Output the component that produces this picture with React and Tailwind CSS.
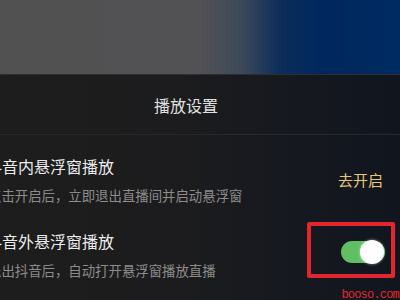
import React, { useState } from 'react';

const font = { fontFamily: '"Noto Sans CJK SC", "Noto Sans", sans-serif' };

const SettingRow = ({ title, desc, right, className = '' }) => (
  <div className={`flex items-center justify-between pr-[15px] ${className}`}>
    <div className="ml-[-14px] flex flex-col">
      <div className="text-[16px] leading-[20px] text-[#ececec] whitespace-nowrap">{title}</div>
      <div className="mt-[10px] ml-[2px] text-[13.4px] leading-[18px] text-[#8c8c8c] whitespace-nowrap">{desc}</div>
    </div>
    {right}
  </div>
);

const Toggle = ({ on, onChange }) => (
  <button
    onClick={() => onChange(!on)}
    className={`relative w-[44px] h-[22px] rounded-full mb-[6px] ${on ? 'bg-[#5fbf62]' : 'bg-[#555]'}`}
  >
    <span
      className={`absolute top-[-1px] w-[24px] h-[24px] rounded-full bg-white shadow-[0_0_3px_rgba(255,255,255,0.6)] ${on ? 'left-[19px]' : 'left-[1px]'}`}
    />
    {/* red highlight box */}
    <span className="absolute left-[-34px] top-[-19px] right-[-10px] bottom-[-15px] border-[4px] border-[#e3262d] rounded-[2px] pointer-events-none" />
  </button>
);

export default function App() {
  const [outside, setOutside] = useState(true);

  return (
    <div className="relative w-[400px] h-[300px] overflow-hidden flex flex-col bg-[#1b1c1e]" style={font}>
      {/* dimmed video behind the sheet */}
      <div className="h-[75px] shrink-0 bg-[linear-gradient(to_right,#515151_0%,#525255_50%,#3e4a5a_60%,#0d2d5a_70%,#00285e_80%,#002a62_100%)] border-b border-[#2e2e30]" />

      {/* sheet */}
      <div className="flex-1 flex flex-col bg-[linear-gradient(to_right,#1d1d1d_0%,#1c1c1e_45%,#16191f_70%,#11151e_100%)]">
        <div className="h-[59px] flex items-center justify-center pr-[28px] text-[16px] text-[#e2e2e2]">
          播放设置
        </div>
        <div className="h-px bg-[#27282a]" />

        <SettingRow
          className="pt-[21px] pb-[13px]"
          title="抖音内悬浮窗播放"
          desc="点击开启后，立即退出直播间并启动悬浮窗"
          right={<span className="text-[15px] leading-[20px] text-[#e9c878] pr-[2px]">去开启</span>}
        />

        <SettingRow
          className="pt-[14px]"
          title="抖音外悬浮窗播放"
          desc="退出抖音后，自动打开悬浮窗播放直播"
          right={<Toggle on={outside} onChange={setOutside} />}
        />
      </div>

      {/* watermark */}
      <div
        className="absolute right-[1px] bottom-[-3px] text-[12px] leading-[16px] tracking-[-0.8px] text-[#e3262d]"
        style={{ fontFamily: '"Liberation Mono", monospace' }}
      >
        booso.com
      </div>
    </div>
  );
}
